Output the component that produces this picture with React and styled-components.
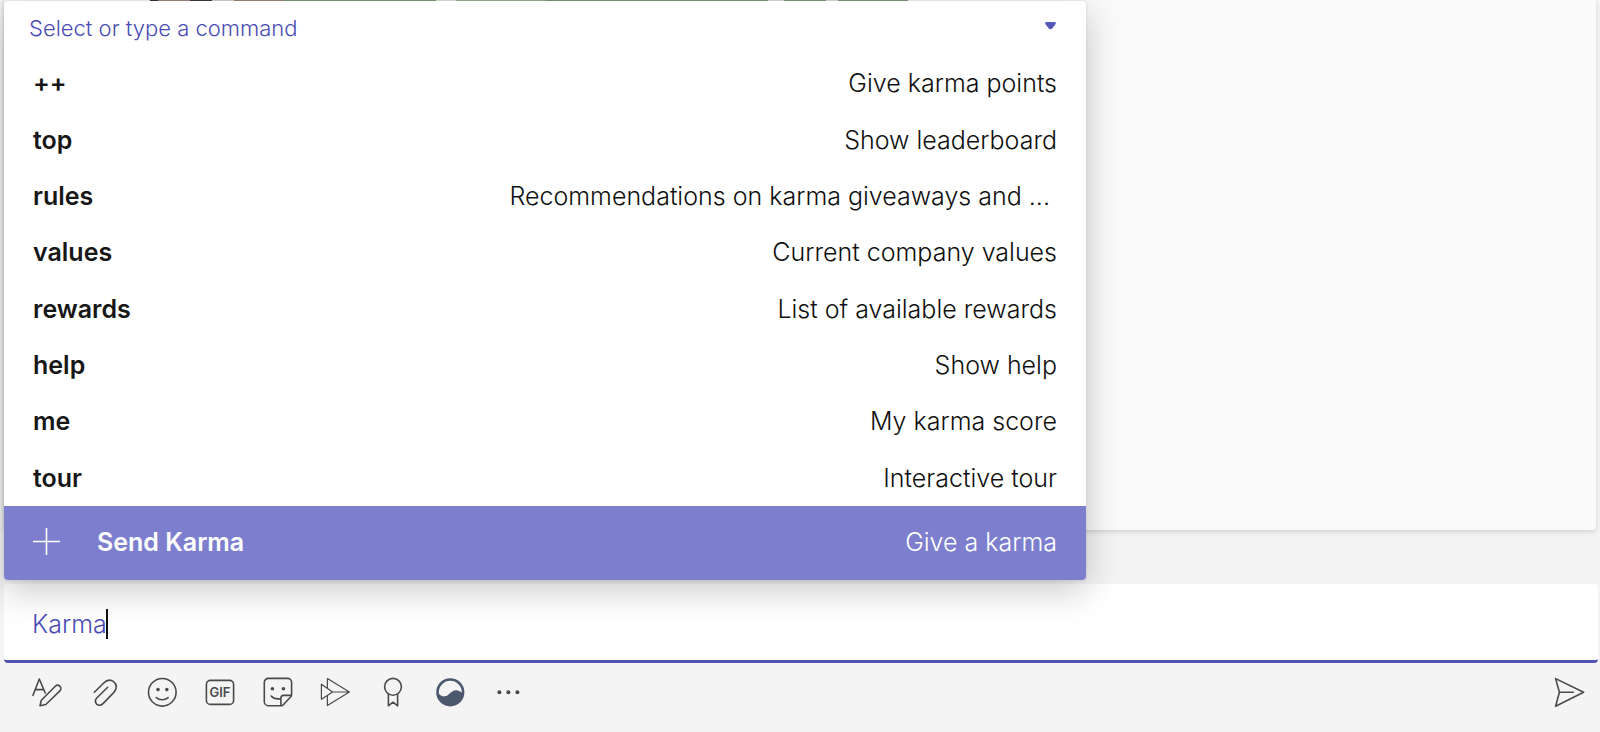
import React, { useState } from 'react'
import styled, { createGlobalStyle } from 'styled-components'

const commands = [
  { name: '++', info: 'Give karma points' },
  { name: 'top', info: 'Show leaderboard' },
  { name: 'rules', info: 'Recommendations on karma giveaways and ...\u00a0' },
  { name: 'values', info: 'Current company values' },
  { name: 'rewards', info: 'List of available rewards' },
  { name: 'help', info: 'Show help' },
  { name: 'me', info: 'My karma score' },
  { name: 'tour', info: 'Interactive tour' },
]

const tools = [
  {
    label: 'Format',
    icon: (
      <>
        <path d="M2 19.3 8.3 3 14.2 17M4.2 13.6h8.6" />
        <path d="M9 29.7l1.3-5.4L24.3 10.3a3.2 3.2 0 0 1 4.6 4.6L14.8 28.5z" />
      </>
    ),
  },
  {
    label: 'Attach',
    icon: (
      <path d="M5.3 16.3 14.5 7.2C17.5 4.2 21.5 3.4 24.6 5.6c3.6 2.8 3.5 7.6.3 10.8L14 27.6c-2.2 2.2-5 2.1-6.5.3-1.5-1.8-1.3-4.3.5-6.1L18.7 11.3" />
    ),
  },
  {
    label: 'Emoji',
    icon: (
      <>
        <circle cx="16.3" cy="16.3" r="13.8" />
        <path d="M10.3 21.6c3.2 2.9 8.6 2.9 11.8 0" />
        <g className="solid">
          <circle cx="12" cy="13.6" r="1.8" />
          <circle cx="20.8" cy="13.6" r="1.8" />
        </g>
      </>
    ),
  },
  {
    label: 'GIF',
    icon: (
      <>
        <rect x="2.4" y="4.4" width="27.2" height="24" rx="4" />
        <text x="16" y="21" textAnchor="middle">GIF</text>
      </>
    ),
  },
  {
    label: 'Sticker',
    icon: (
      <>
        <path d="M19.5 29.7H6.3a4 4 0 0 1-4-4V6.4a4 4 0 0 1 4-4h19.3a4 4 0 0 1 4 4v12.2c0 1-.4 1.8-1 2.4l-7.3 7.7c-.5.6-1.1 1-1.8 1z" />
        <path d="M18.9 29.5v-7.2c0-1.7 1.1-2.9 2.8-2.9h7.7M9.2 20c2.4 2.7 5.8 3.4 9.5 2.6" />
        <g className="solid">
          <circle cx="10.4" cy="12.8" r="1.8" />
          <circle cx="21.4" cy="12.8" r="1.8" />
        </g>
      </>
    ),
  },
  {
    label: 'Stream',
    icon: (
      <path
        strokeWidth="1.2"
        d="M8.4 12V2.6L30.4 16 8.4 29.5v-9.3M2.4 8.2 13.6 16 2.4 23.2zM13.6 16h16.8"
      />
    ),
  },
  {
    label: 'Praise',
    icon: (
      <>
        <circle cx="16" cy="10.8" r="8.4" />
        <path d="M11.4 18v11.8l4.6-3.6 4.6 3.6V18" />
      </>
    ),
  },
  {
    label: 'Karma',
    icon: (
      <>
        <circle cx="16.3" cy="16.3" r="12.8" stroke="#4c586e" strokeWidth="2.6" />
        <path
          fill="#4c586e"
          stroke="none"
          d="M3.5 15.5C5 19 7.8 20.8 10.8 20.3c3.4-.5 4.9-3.3 7.4-4.9 3.4-2.2 7.6-1.3 10.8 2.4C28.2 24.6 22.9 29.3 16.3 29.3 9.1 29.3 3.5 23.5 3.5 15.5z"
        />
      </>
    ),
  },
  {
    label: 'More options',
    icon: (
      <g className="solid">
        <circle cx="7.4" cy="16.3" r="2" />
        <circle cx="16.4" cy="16.3" r="2" />
        <circle cx="25.4" cy="16.3" r="2" />
      </g>
    ),
  },
]

export default function App() {
  const [message, setMessage] = useState('Karma')

  return (
    <>
      <GlobalStyle />
      <Page>
        <Chat>
          <Card>
            <Photo />
          </Card>
        </Chat>
        <Composer>
          <Menu>
            <MenuHead>
              Select or type a command
              <svg width="11" height="8" viewBox="0 0 11 8">
                <path
                  d="M1.5 0h8c1.3 0 1.7 1.4 1 2.2L7.2 6.4c-1 1.1-2.4 1.1-3.4 0L.5 2.2C-.2 1.4.2 0 1.5 0z"
                  fill="#5558b8"
                />
              </svg>
            </MenuHead>
            <List>
              {commands.map((command) => (
                <li key={command.name}>
                  <Command>
                    <b>{command.name}</b>
                    <span>{command.info}</span>
                  </Command>
                </li>
              ))}
            </List>
            <SendKarma>
              <svg width="27" height="28" viewBox="0 0 27 28">
                <path d="M13.5 0v27M0 13.5h27" stroke="#fff" strokeWidth="1.6" />
              </svg>
              <b>Send Karma</b>
              <span>Give a karma</span>
            </SendKarma>
          </Menu>
          <Field>
            <Input
              aria-label="Message"
              value={message}
              onChange={(e) => setMessage(e.target.value)}
            />
            <Caret />
          </Field>
          <Toolbar>
            <Tools>
              {tools.map((tool) => (
                <ToolButton key={tool.label} aria-label={tool.label}>
                  <svg viewBox="0 0 32 32">{tool.icon}</svg>
                </ToolButton>
              ))}
            </Tools>
            <ToolButton aria-label="Send">
              <svg viewBox="0 0 32 32">
                <path d="M1.6 2.6 29.6 16.3 1.6 30.2 5.4 16.3zM5.4 16.3h13.9" />
              </svg>
            </ToolButton>
          </Toolbar>
        </Composer>
      </Page>
    </>
  )
}

const GlobalStyle = createGlobalStyle`
  * {
    box-sizing: border-box;
  }
  body {
    margin: 0;
    background: #f4f4f4;
    font-family: Inter, 'Liberation Sans', sans-serif;
    font-weight: 300;
  }
  button, input {
    font: inherit;
    border: none;
    background: none;
    padding: 0;
  }
  button {
    cursor: pointer;
  }
`
const Page = styled.div`
  min-height: 100vh;
  display: flex;
  flex-direction: column;
`
const Chat = styled.main`
  flex: 1;
  display: flex;
  padding: 0 4px 54px;
`
const Card = styled.section`
  flex: 1;
  background: #fafafa;
  border-radius: 0 0 4px 4px;
  box-shadow: 0 2px 5px rgba(0, 0, 0, 0.14);
`
// last line of the image attachment that the menu covers
const Photo = styled.div`
  width: 758px;
  height: 1px;
  margin-left: 146px;
  background: linear-gradient(
    90deg,
    #3b3530 0 8px, #a58a7c 8px 40px, #3c3a42 40px 62px, #dcd8d6 62px 84px,
    #a58a7c 84px 134px, #7f9f78 134px 286px, #e4ebe2 286px 306px,
    #9db397 306px 396px, #7f9f78 396px 618px, #e8e4e6 618px 634px,
    #7f9f78 634px 676px, #dfe6dd 676px 688px, #7f9f78 688px
  );
`
const Composer = styled.footer`
  position: relative;
  margin: 0 2px 0 4px;
`
const Menu = styled.div`
  position: absolute;
  left: 0;
  bottom: calc(100% + 4px);
  width: 100%;
  max-width: 1082px;
  background: #fff;
  border-radius: 4px;
  overflow: hidden;
  box-shadow: 0 10px 36px rgba(0, 0, 0, 0.22), 0 0 3px rgba(0, 0, 0, 0.12);
`
const MenuHead = styled.div`
  display: flex;
  justify-content: space-between;
  align-items: center;
  height: 54px;
  padding: 0 30px 0 25px;
  font-size: 22px;
  color: #4a4db4;
  svg {
    margin-bottom: 4px;
  }
`
const List = styled.ul`
  display: grid;
  grid-template-rows: repeat(8, 1fr);
  height: 451px;
  margin: 0;
  padding: 0;
  list-style: none;
`
const Command = styled.button`
  display: flex;
  justify-content: space-between;
  align-items: center;
  width: 100%;
  height: 100%;
  padding: 0 29px;
  font-size: 25px;
  color: #101010;
  b {
    font-weight: 600;
    color: #171717;
  }
`
const SendKarma = styled.button`
  display: flex;
  align-items: center;
  width: 100%;
  height: 74px;
  padding: 0 29px 2px;
  font-size: 25px;
  color: #fff;
  background: #7d7fce;
  b {
    flex: 1;
    margin-left: 37px;
    font-weight: 600;
    text-align: left;
  }
`
const Field = styled.div`
  display: flex;
  align-items: center;
  height: 79px;
  padding: 3px 28px 0;
  background: #fff;
  border-bottom: 3px solid #5153b1;
  border-radius: 4px;
`
const Input = styled.input`
  field-sizing: content;
  min-width: 2px;
  font-size: 25px;
  color: #4a4db4;
  caret-color: transparent;
  outline: none;
`
const Caret = styled.span`
  width: 2px;
  height: 30px;
  margin-left: -1px;
  background: #111;
`
const Toolbar = styled.div`
  display: flex;
  justify-content: space-between;
  gap: 24px;
  height: 69px;
  padding: 13px 12px 0 27px;
`
const Tools = styled.div`
  display: flex;
  justify-content: space-between;
  flex: 0 1 493px;
`
const ToolButton = styled.button`
  width: 32px;
  height: 32px;
  svg {
    display: block;
    width: 32px;
    height: 32px;
    fill: none;
    stroke: #4a4a4c;
    stroke-width: 1.6;
    stroke-linejoin: round;
    stroke-linecap: round;
  }
  .solid, text {
    fill: #4a4a4c;
    stroke: none;
  }
  text {
    font-size: 13px;
    font-weight: 600;
  }
`
